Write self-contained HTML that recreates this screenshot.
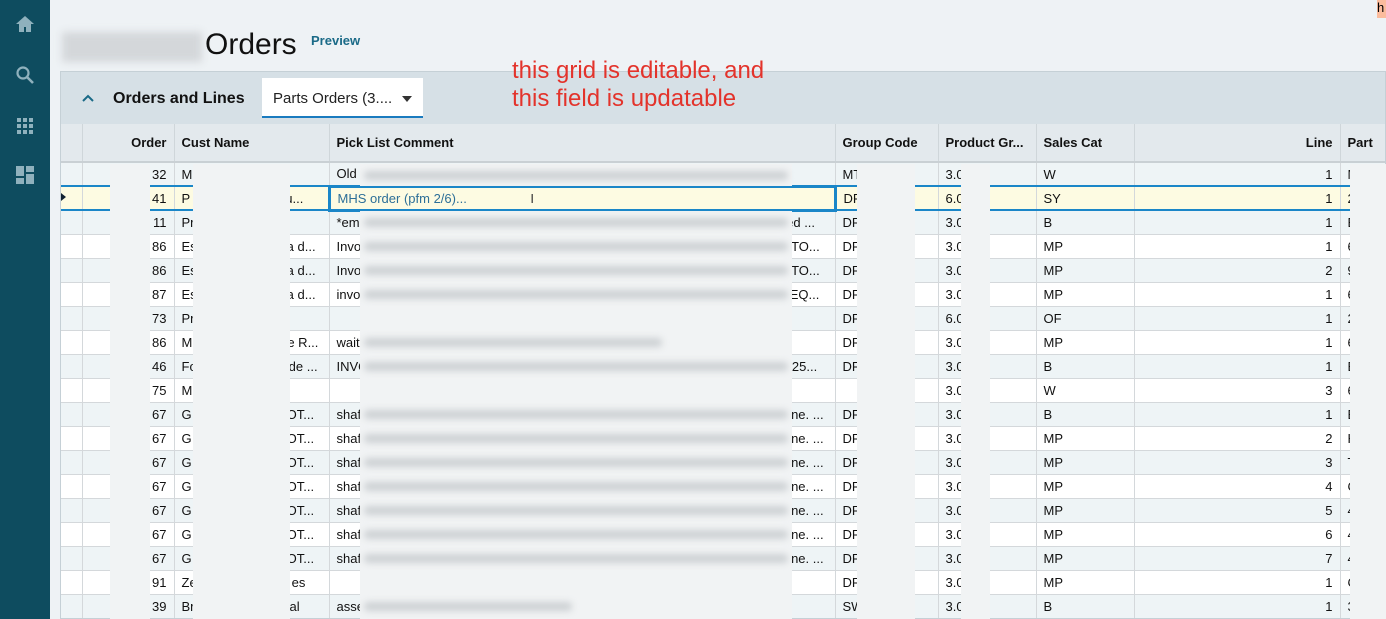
<!DOCTYPE html>
<html><head><meta charset="utf-8"><style>
*{box-sizing:border-box;margin:0;padding:0}
body{width:1386px;height:619px;overflow:hidden;background:#eef2f5;font-family:"Liberation Sans",sans-serif;position:relative}
#side{position:absolute;left:0;top:0;width:50px;height:619px;background:#0e4c5f}
.ic{position:absolute;left:15px}
h1{position:absolute;left:205px;top:28px;font-weight:normal;font-size:30px;color:#111}
.blurt{position:absolute;left:62px;top:32px;width:140px;height:30px;background:#d4d7da;filter:blur(4px)}
#prev{position:absolute;left:311px;top:33px;font-size:13px;font-weight:bold;color:#1a6a87}
#panel{position:absolute;left:60px;top:71px;width:1326px;height:548px;background:#d6e0e6;border:1px solid #c5d0d6;overflow:hidden}
#ph{position:absolute;left:52px;top:18px;font-size:16px;font-weight:bold;color:#111}
#car{position:absolute;left:20px;top:21px}
#dd{position:absolute;left:201px;top:6px;width:161px;height:40px;background:#fff;border-bottom:2px solid #1a7bbf;font-size:15px;padding:12px 0 0 11px;color:#222}
#dd:after{content:"";position:absolute;right:11px;top:18px;border:5px solid transparent;border-top:6px solid #333}
table{position:absolute;left:0;top:52px;border-collapse:collapse;table-layout:fixed;width:1400px;font-size:13px;color:#111}
th{height:38px;background:#e3e9ed;text-align:left;font-weight:bold;padding:0 7px;border-right:1px solid #cfd6da;border-bottom:2px solid #c9d0d4;white-space:nowrap;overflow:hidden}
td{height:24px;padding:0 7px;border-right:1px solid #d4d8db;border-bottom:1px solid #d4d8db;white-space:nowrap;overflow:hidden;background:#fff}
tr:nth-child(even) td{background:#eef4f6}
.r{text-align:right}
tr.sel td{background:#fdfbe2;border-top:2px solid #1a86c8;border-bottom:2px solid #1a86c8}
tr.sel td.ed{border:3px solid #1a86c8;color:#2d6f98}
.ov{position:absolute;background:#f1f3f4}
.ov i{position:absolute;left:4px;right:4px;height:9px;background:#cdd1d4;filter:blur(3.5px);border-radius:4px}
#note{position:absolute;left:512px;top:57px;color:#e3332b;font-size:24px;line-height:28px}
#h{position:absolute;left:1377px;top:0;width:9px;height:18px;background:#fbbc9d;font-size:13px}
</style></head><body>
<div id="side">
<svg class="ic" style="top:14px" width="20" height="20" viewBox="0 0 20 20"><path d="M10 2L1 10h3v8h5v-5h2v5h5v-8h3z" fill="#8fb1bd"/></svg>
<svg class="ic" style="top:65px" width="20" height="20" viewBox="0 0 20 20"><circle cx="8" cy="8" r="5.5" fill="none" stroke="#8fb1bd" stroke-width="2.2"/><path d="M12 12l6 6" stroke="#8fb1bd" stroke-width="2.6"/></svg>
<svg class="ic" style="top:116px" width="20" height="20" viewBox="0 0 20 20" fill="#8fb1bd"><rect x="2" y="2" width="4" height="4"/><rect x="8" y="2" width="4" height="4"/><rect x="14" y="2" width="4" height="4"/><rect x="2" y="8" width="4" height="4"/><rect x="8" y="8" width="4" height="4"/><rect x="14" y="8" width="4" height="4"/><rect x="2" y="14" width="4" height="4"/><rect x="8" y="14" width="4" height="4"/><rect x="14" y="14" width="4" height="4"/></svg>
<svg class="ic" style="top:165px" width="20" height="20" viewBox="0 0 20 20" fill="#8fb1bd"><rect x="1" y="1" width="8" height="10"/><rect x="11" y="1" width="8" height="6"/><rect x="1" y="13" width="8" height="6"/><rect x="11" y="9" width="8" height="10"/></svg>
</div>
<div class="blurt"></div>
<h1>Orders</h1>
<div id="prev">Preview</div>
<div id="h">h</div>
<div id="panel">
<svg id="car" width="14" height="10" viewBox="0 0 14 10"><path d="M2 8l5-5 5 5" fill="none" stroke="#1a6a87" stroke-width="2"/></svg>
<div id="ph">Orders and Lines</div>
<div id="dd">Parts Orders (3....</div>
<table>
<colgroup><col style="width:21px"><col style="width:92px"><col style="width:155px"><col style="width:506px"><col style="width:103px"><col style="width:98px"><col style="width:98px"><col style="width:206px"><col style="width:121px"></colgroup>
<tr><th></th><th class="r">Order</th><th>Cust Name</th><th>Pick List Comment</th><th>Group Code</th><th>Product Gr...</th><th>Sales Cat</th><th class="r">Line</th><th>Part</th></tr>
<tr><td></td><td class="r">32</td><td>M</td><td>Old</td><td>MT</td><td>3.0</td><td>W</td><td class="r">1</td><td>M</td></tr>
<tr class="sel"><td style="position:relative"><span style="position:absolute;left:0;top:6px;border:4px solid transparent;border-left:5px solid #123"></span></td><td class="r">41</td><td>P<span style="padding-left:85px">iqu...</span></td><td class="ed">MHS order (pfm 2/6)... <span style="padding-left:60px;color:#333">I</span></td><td>DR</td><td>6.0</td><td>SY</td><td class="r">1</td><td>2</td></tr>
<tr><td></td><td class="r">11</td><td>Pr</td><td>*em<span style="padding-left:420px">sed ...</span></td><td>DR</td><td>3.0</td><td>B</td><td class="r">1</td><td>B</td></tr>
<tr><td></td><td class="r">86</td><td>Es<span style="padding-left:90px">a d...</span></td><td>Invo<span style="padding-left:430px">TO...</span></td><td>DR</td><td>3.0</td><td>MP</td><td class="r">1</td><td>6</td></tr>
<tr><td></td><td class="r">86</td><td>Es<span style="padding-left:90px">a d...</span></td><td>Invo<span style="padding-left:430px">TO...</span></td><td>DR</td><td>3.0</td><td>MP</td><td class="r">2</td><td>9</td></tr>
<tr><td></td><td class="r">87</td><td>Es<span style="padding-left:90px">a d...</span></td><td>invo<span style="padding-left:420px">REQ...</span></td><td>DR</td><td>3.0</td><td>MP</td><td class="r">1</td><td>6</td></tr>
<tr><td></td><td class="r">73</td><td>Pr</td><td></td><td>DR</td><td>6.0</td><td>OF</td><td class="r">1</td><td>2</td></tr>
<tr><td></td><td class="r">86</td><td>M<span style="padding-left:95px">e R...</span></td><td>wait</td><td>DR</td><td>3.0</td><td>MP</td><td class="r">1</td><td>6</td></tr>
<tr><td></td><td class="r">46</td><td>Fo<span style="padding-left:92px">de ...</span></td><td>INVO<span style="padding-left:420px">/25...</span></td><td>DR</td><td>3.0</td><td>B</td><td class="r">1</td><td>B</td></tr>
<tr><td></td><td class="r">75</td><td>M</td><td></td><td></td><td>3.0</td><td>W</td><td class="r">3</td><td>6</td></tr>
<tr><td></td><td class="r">67</td><td>G<span style="padding-left:95px">OT...</span></td><td>shaf<span style="padding-left:430px">ne. ...</span></td><td>DR</td><td>3.0</td><td>B</td><td class="r">1</td><td>B</td></tr>
<tr><td></td><td class="r">67</td><td>G<span style="padding-left:95px">OT...</span></td><td>shaf<span style="padding-left:430px">ne. ...</span></td><td>DR</td><td>3.0</td><td>MP</td><td class="r">2</td><td>H</td></tr>
<tr><td></td><td class="r">67</td><td>G<span style="padding-left:95px">OT...</span></td><td>shaf<span style="padding-left:430px">ne. ...</span></td><td>DR</td><td>3.0</td><td>MP</td><td class="r">3</td><td>T</td></tr>
<tr><td></td><td class="r">67</td><td>G<span style="padding-left:95px">OT...</span></td><td>shaf<span style="padding-left:430px">ne. ...</span></td><td>DR</td><td>3.0</td><td>MP</td><td class="r">4</td><td>C</td></tr>
<tr><td></td><td class="r">67</td><td>G<span style="padding-left:95px">OT...</span></td><td>shaf<span style="padding-left:430px">ne. ...</span></td><td>DR</td><td>3.0</td><td>MP</td><td class="r">5</td><td>4</td></tr>
<tr><td></td><td class="r">67</td><td>G<span style="padding-left:95px">OT...</span></td><td>shaf<span style="padding-left:430px">ne. ...</span></td><td>DR</td><td>3.0</td><td>MP</td><td class="r">6</td><td>4</td></tr>
<tr><td></td><td class="r">67</td><td>G<span style="padding-left:95px">OT...</span></td><td>shaf<span style="padding-left:430px">ne. ...</span></td><td>DR</td><td>3.0</td><td>MP</td><td class="r">7</td><td>4</td></tr>
<tr><td></td><td class="r">91</td><td>Ze<span style="padding-left:95px">es</span></td><td></td><td>DR</td><td>3.0</td><td>MP</td><td class="r">1</td><td>C</td></tr>
<tr><td></td><td class="r">39</td><td>Br<span style="padding-left:95px">al</span></td><td>asse</td><td>SW</td><td>3.0</td><td>B</td><td class="r">1</td><td>3</td></tr>
</table>
</div>
<div class="ov" style="left:110px;top:164px;width:40px;height:455px"></div>
<div class="ov" style="left:193px;top:164px;width:97px;height:455px"></div>
<div class="ov" style="left:360px;top:164px;width:432px;height:22px"><i style="top:7px"></i></div>
<div class="ov" style="left:360px;top:211px;width:432px;height:408px">
<i style="top:7px"></i><i style="top:31px"></i><i style="top:55px"></i><i style="top:79px"></i><i style="top:127px;right:130px"></i><i style="top:151px"></i><i style="top:199px"></i><i style="top:223px"></i><i style="top:247px"></i><i style="top:271px"></i><i style="top:295px"></i><i style="top:319px"></i><i style="top:343px"></i><i style="top:391px;right:220px"></i></div>
<div class="ov" style="left:857px;top:164px;width:58px;height:455px"></div>
<div class="ov" style="left:961px;top:164px;width:29px;height:455px"></div>
<div class="ov" style="left:1350px;top:164px;width:36px;height:455px"></div>
<div id="note">this grid is editable, and<br>this field is updatable</div>
</body></html>
